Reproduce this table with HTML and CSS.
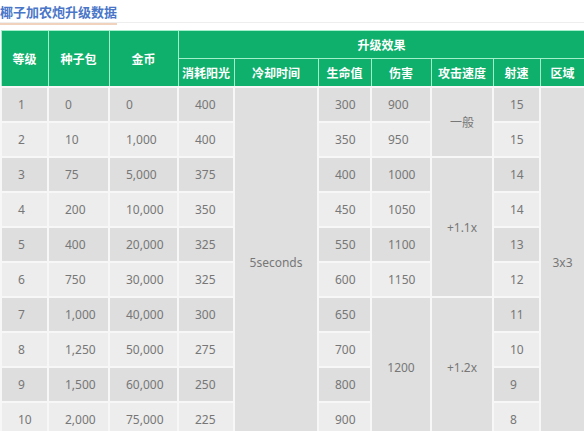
FILE: index.html
```html
<!DOCTYPE html>
<html lang="zh-CN">
<head>
<meta charset="utf-8">
<link rel="stylesheet" href="styles.css">
</head>
<body>
<div class="page">
  <div class="title-bar"><h2 class="title">椰子加农炮升级数据</h2></div>
  <table class="data">
    <colgroup>
      <col style="width:47px"><col style="width:61px"><col style="width:69px"><col style="width:56px"><col style="width:84px"><col style="width:53px"><col style="width:60px"><col style="width:62px"><col style="width:47px"><col style="width:45px">
    </colgroup>
    <thead>
      <tr>
        <th rowspan="2">等级</th>
        <th rowspan="2">种子包</th>
        <th rowspan="2">金币</th>
        <th colspan="7">升级效果</th>
      </tr>
      <tr>
        <th>消耗阳光</th><th>冷却时间</th><th>生命值</th><th>伤害</th><th>攻击速度</th><th>射速</th><th>区域</th>
      </tr>
    </thead>
    <tbody>
      <tr class="odd"><td>1</td><td>0</td><td>0</td><td>400</td><td rowspan="10" class="merge c">5seconds</td><td>300</td><td>900</td><td rowspan="2" class="merge c">一般</td><td>15</td><td rowspan="10" class="merge c">3x3</td></tr>
      <tr class="even"><td>2</td><td>10</td><td>1,000</td><td>400</td><td>350</td><td>950</td><td>15</td></tr>
      <tr class="odd"><td>3</td><td>75</td><td>5,000</td><td>375</td><td>400</td><td>1000</td><td rowspan="4" class="merge c">+1.1x</td><td>14</td></tr>
      <tr class="even"><td>4</td><td>200</td><td>10,000</td><td>350</td><td>450</td><td>1050</td><td>14</td></tr>
      <tr class="odd"><td>5</td><td>400</td><td>20,000</td><td>325</td><td>550</td><td>1100</td><td>13</td></tr>
      <tr class="even"><td>6</td><td>750</td><td>30,000</td><td>325</td><td>600</td><td>1150</td><td>12</td></tr>
      <tr class="odd"><td>7</td><td>1,000</td><td>40,000</td><td>300</td><td>650</td><td rowspan="4" class="merge c">1200</td><td rowspan="4" class="merge c">+1.2x</td><td>11</td></tr>
      <tr class="even"><td>8</td><td>1,250</td><td>50,000</td><td>275</td><td>700</td><td>10</td></tr>
      <tr class="odd"><td>9</td><td>1,500</td><td>60,000</td><td>250</td><td>800</td><td>9</td></tr>
      <tr class="even"><td>10</td><td>2,000</td><td>75,000</td><td>225</td><td>900</td><td>8</td></tr>
    </tbody>
  </table>
</div>
</body>
</html>
```
FILE: styles.css
```css
html, body {
  margin: 0;
  padding: 0;
  background: #ffffff;
}
body {
  font-family: "Noto Sans", "Noto Sans CJK SC", sans-serif;
  overflow: hidden;
}
.page {
  width: 584px;
}
.title-bar {
  height: 22px;
  border-bottom: 1px solid #eeeeee;
  margin-bottom: 7px;
}
.title {
  margin: 0;
  padding-top: 1px;
  font-size: 13px;
  line-height: 15px;
  font-weight: bold;
  color: #4a76c8;
  font-family: "Noto Sans CJK SC", sans-serif;
  display: inline-block;
  box-sizing: border-box;
  width: 117px;
  height: 22px;
  border-bottom: 2px solid #f1d3bd;
  white-space: nowrap;
}
.data {
  border-collapse: collapse;
  table-layout: fixed;
  width: 584px;
}
.data th {
  background: #0faf6c;
  color: #ffffff;
  font-family: "Noto Sans CJK SC", sans-serif;
  font-weight: bold;
  font-size: 12px;
  height: 27px;
  padding: 0;
  border: 1px solid #a4efcb;
  text-align: center;
}
.data td {
  height: 33px;
  padding: 0 0 0 16px;
  font-size: 12px;
  color: #777777;
  border: 2px solid #f7f7f7;
  text-align: left;
  white-space: nowrap;
}
.data tr.odd td {
  background: #dedede;
}
.data tr.even td {
  background: #ededed;
}
.data tr td.merge {
  background: #dfdfdf;
}
.data td.c {
  text-align: center;
  padding: 0;
}
```
